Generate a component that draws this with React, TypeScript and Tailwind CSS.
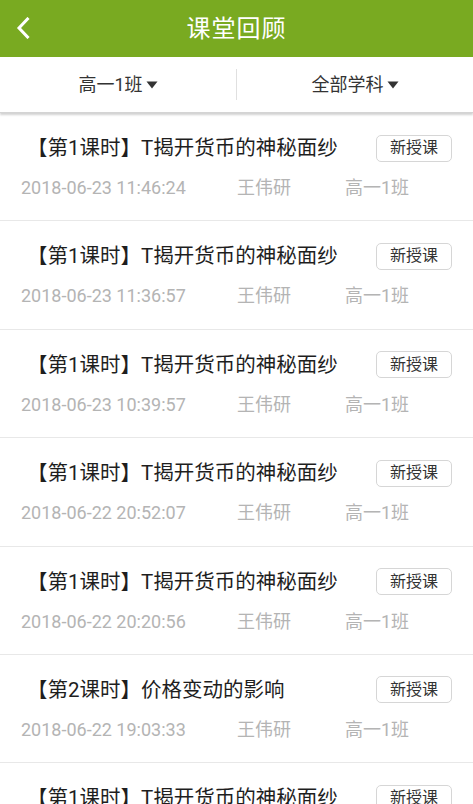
const font = '"Roboto", "Noto Sans CJK SC", sans-serif';

type Lesson = {
  title: string;
  time: string;
  teacher: string;
  klass: string;
};

const lessons: Lesson[] = [
  { title: '【第1课时】T揭开货币的神秘面纱', time: '2018-06-23 11:46:24', teacher: '王伟研', klass: '高一1班' },
  { title: '【第1课时】T揭开货币的神秘面纱', time: '2018-06-23 11:36:57', teacher: '王伟研', klass: '高一1班' },
  { title: '【第1课时】T揭开货币的神秘面纱', time: '2018-06-23 10:39:57', teacher: '王伟研', klass: '高一1班' },
  { title: '【第1课时】T揭开货币的神秘面纱', time: '2018-06-22 20:52:07', teacher: '王伟研', klass: '高一1班' },
  { title: '【第1课时】T揭开货币的神秘面纱', time: '2018-06-22 20:20:56', teacher: '王伟研', klass: '高一1班' },
  { title: '【第2课时】价格变动的影响', time: '2018-06-22 19:03:33', teacher: '王伟研', klass: '高一1班' },
  { title: '【第1课时】T揭开货币的神秘面纱', time: '2018-06-22 18:40:12', teacher: '王伟研', klass: '高一1班' },
];

function Caret() {
  return (
    <svg width="12" height="8" viewBox="0 0 12 8" className="ml-[3px]">
      <path d="M0.5 0.5 L11.5 0.5 L6 7.5 Z" fill="#333" />
    </svg>
  );
}

function LessonRow({ lesson }: { lesson: Lesson }) {
  return (
    <div className="h-[108.4px] shrink-0 border-b border-[#e8e8e8] pl-[16px] pr-[16px] pt-[21px]">
      <div className="flex items-center justify-between">
        <span className="pl-[11px] text-[20.5px] leading-[28px] text-[#1e1e1e]">{lesson.title}</span>
        <span className="mr-[5px] flex h-[27px] w-[76px] shrink-0 items-center justify-center rounded-[5px] border border-[#d6d6d6] text-[16px] text-[#333]">
          新授课
        </span>
      </div>
      <div className="mt-[14px] flex text-[18px] leading-[24px] text-[#b4b4b4]">
        <span className="w-[221px] pl-[5px]">{lesson.time}</span>
        <span className="w-[108px]">{lesson.teacher}</span>
        <span>{lesson.klass}</span>
      </div>
    </div>
  );
}

export default function App() {
  return (
    <div className="flex h-[804px] w-[473px] flex-col overflow-hidden bg-white" style={{ fontFamily: font }}>
      {/* header */}
      <div className="relative flex h-[57px] shrink-0 items-center justify-center bg-[#79aa21]">
        <svg width="14" height="22" viewBox="0 0 14 22" className="absolute left-[16px] top-[17px]">
          <path d="M11.5 2 L3 11 L11.5 20" fill="none" stroke="#fff" strokeWidth="3" strokeLinecap="square" />
        </svg>
        <span className="text-[24px] tracking-[1px] text-white">课堂回顾</span>
      </div>

      {/* filters */}
      <div className="relative z-10 flex h-[56px] shrink-0 items-center border-b border-[#d4d4d4] bg-white shadow-[0_2px_2px_rgba(0,0,0,0.18)]">
        <div className="flex flex-1 items-center justify-center text-[18px] text-[#333]">
          高一1班
          <Caret />
        </div>
        <div className="h-[31px] w-px bg-[#e0e0e0]" />
        <div className="flex flex-1 items-center justify-center text-[18px] text-[#333]">
          全部学科
          <Caret />
        </div>
      </div>

      {/* list */}
      <div className="flex flex-col">
        {lessons.map((l, i) => (
          <LessonRow key={i} lesson={l} />
        ))}
      </div>
    </div>
  );
}
